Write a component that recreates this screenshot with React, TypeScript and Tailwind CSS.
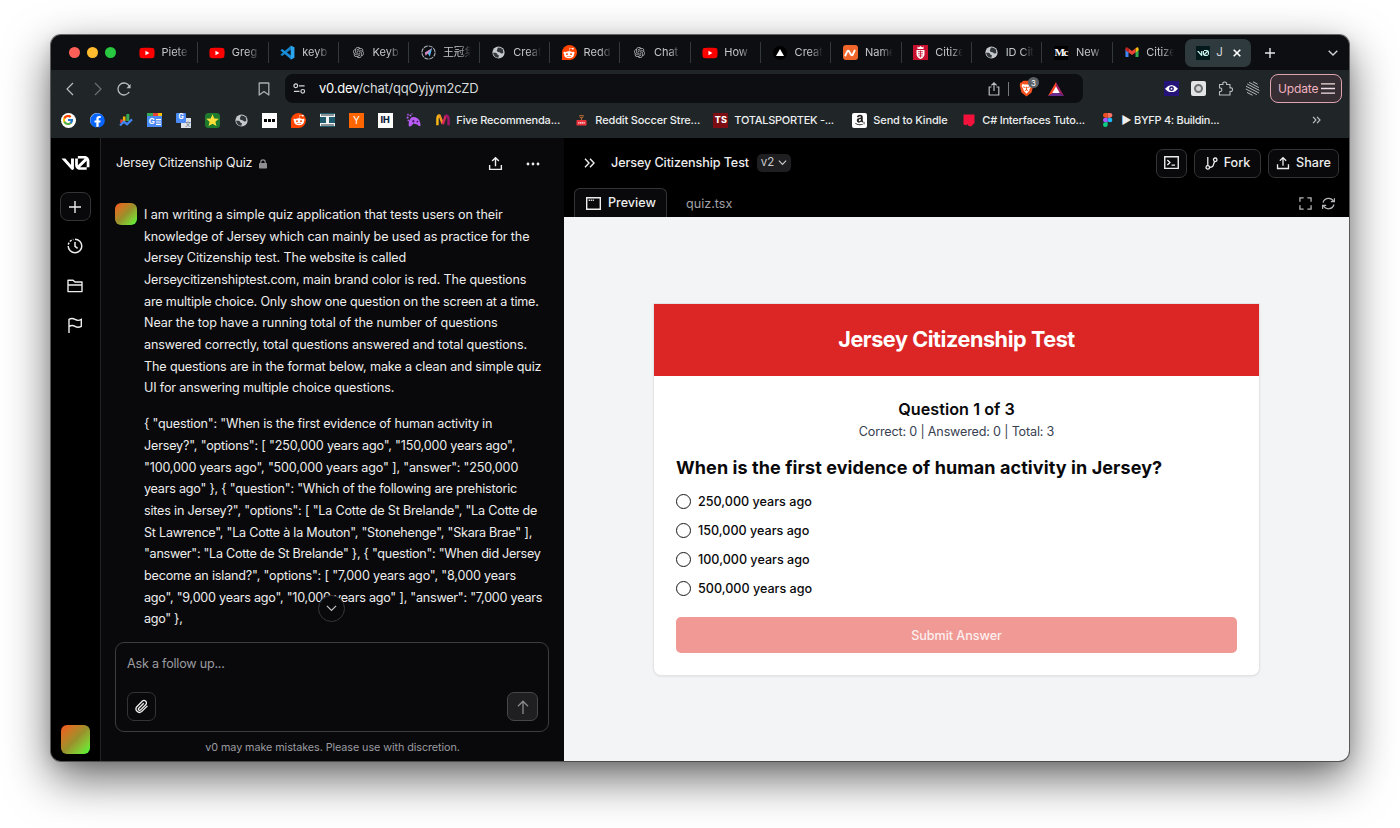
import type { ReactNode } from "react";
import { FaYoutube, FaFacebook, FaRedditAlien, FaAmazon } from "react-icons/fa";
import { FcGoogle } from "react-icons/fc";
import { RiOpenaiFill } from "react-icons/ri";

function V0Logo({ className }: { className?: string }) {
  return (
    <svg viewBox="0 0 40 20" fill="currentColor" className={className}>
      <path d="M23.39 0H32.92C36.78 0 39.91 3.13 39.91 7V16.08H36V7C36 6.9 36 6.81 35.99 6.72L26.46 16.08H36V19.78H26.56C22.7 19.78 19.48 16.61 19.48 12.75V3.69H23.39V12.75C23.39 12.93 23.41 13.1 23.43 13.27L33.17 3.7C33.09 3.69 33 3.69 32.92 3.69H23.39V0Z" />
      <path d="M13.77 19.1L0 3.69H5.54L13.62 12.73V3.69H17.75V17.57C17.75 19.67 15.17 20.66 13.77 19.1Z" />
    </svg>
  );
}

function Globe() {
  return (
    <svg viewBox="0 0 16 16" className="size-[13px]">
      <circle cx="8" cy="8" r="7.5" fill="#c5c9cc" />
      <path d="M1.2 8.2H4.2Q6.2 8.2 6.6 10.2Q7 11.4 8.4 11.2L8 14.6Q3 14.6 1.2 8.2Z" fill="#30363a" />
      <path d="M7 2.2Q10 1 13.4 4.4L14 8.4Q12.2 10 10.6 8.6Q9.6 7.6 7.6 7.4Q5.4 6.6 6 5Q6.8 4.4 7 2.2Z" fill="#30363a" />
    </svg>
  );
}

function YouTube() {
  return (
    <span className="relative flex items-center justify-center">
      <span className="absolute h-[6px] w-[6px] bg-white" />
      <FaYoutube className="relative size-[16px] text-[#ff0000]" />
    </span>
  );
}

function Reddit() {
  return (
    <span className="flex size-[15px] items-center justify-center rounded-full rounded-bl-[3px] bg-[#ff4500]">
      <FaRedditAlien className="size-[12px] text-white" />
    </span>
  );
}

function VsCode() {
  return (
    <svg viewBox="0 0 16 16" className="size-[15px]">
      <path d="M11.6 0.8V4.7L2.4 11.7L0.6 10.7V10.2Z" fill="#1583c9" />
      <path d="M11.6 15.2V11.3L2.4 4.3L0.6 5.3V5.8Z" fill="#1a90dc" />
      <path d="M11.4 0.4L15.4 2.3V13.7L11.4 15.6Z" fill="#2ba5ee" />
    </svg>
  );
}

function Compass() {
  return (
    <svg viewBox="0 0 16 16" className="size-[15px]" fill="none">
      <circle cx="8" cy="8" r="7" stroke="#aeb6be" strokeWidth="1.2" strokeDasharray="4.5 1" />
      <path d="M11.8 3.5L9.4 12.4L7.4 9L4 8.3Z" fill="#57b6ee" />
      <path d="M11.8 3.5L7.4 9L5 11.4L4 8.3Z" fill="#d685b8" />
    </svg>
  );
}

function Gmail() {
  return (
    <svg viewBox="0 0 16 12" className="w-[14px]">
      <path d="M0.5 2V10.5Q0.5 11.5 1.5 11.5H4V4.5Z" fill="#4285f4" />
      <path d="M15.5 2V10.5Q15.5 11.5 14.5 11.5H12V4.5Z" fill="#34a853" />
      <path d="M12 1.4L13.4 0.5Q15.5 0 15.5 2V3.6L12 6.2Z" fill="#fbbc04" />
      <path d="M4 1.4L2.6 0.5Q0.5 0 0.5 2V3.6L4 6.2Z" fill="#c5221f" />
      <path d="M4 1.4L8 4.5L12 1.4V6.2L8 9.2L4 6.2Z" fill="#ea4335" />
    </svg>
  );
}

function Brave() {
  return (
    <svg viewBox="0 0 16 18" className="h-[17px] w-[15px]">
      <path d="M4.5 0.8H11.5L13 2.4L14.8 2.8L15.2 6L13.4 13.2L8 17.4L2.6 13.2L0.8 6L1.2 2.8L3 2.4Z" fill="#f4521e" />
      <path d="M3.6 4.2L6 4.8H10L12.4 4.2L13.2 6.6L11.4 9.6L11 11.4L8 14.6L5 11.4L4.6 9.6L2.8 6.6Z" fill="#fff" />
      <path d="M4.4 7.2L7 8M11.6 7.2L9 8M8 7V10.6M6.2 11.4L8 10.4L9.8 11.4" stroke="#f4521e" strokeWidth="1" fill="none" />
    </svg>
  );
}

const tabs: { label: string; icon: ReactNode }[] = [
  { label: "Piete", icon: <YouTube /> },
  { label: "Greg", icon: <YouTube /> },
  { label: "keyb", icon: <VsCode /> },
  { label: "Keyb", icon: <RiOpenaiFill className="size-[13px] text-[#b4b6b8]" /> },
  { label: "王冠集", icon: <Compass /> },
  { label: "Creat", icon: <Globe /> },
  { label: "Redd", icon: <Reddit /> },
  { label: "Chat", icon: <RiOpenaiFill className="size-[13px] text-[#b4b6b8]" /> },
  { label: "How", icon: <YouTube /> },
  {
    label: "Creat",
    icon: (
      <span className="flex size-[14px] items-center justify-center rounded-full bg-black">
        <svg viewBox="0 0 8 7" className="w-[8px]"><path d="M4 0L8 7H0Z" fill="#fff" /></svg>
      </span>
    ),
  },
  {
    label: "Name",
    icon: (
      <span className="flex size-[15px] items-center justify-center rounded-[3px] bg-[#f0652a]">
        <svg viewBox="0 0 12 8" className="w-[12px]" fill="none" stroke="#fff" strokeWidth="1.9" strokeLinecap="round">
          <path d="M1.3 6.5L3.4 2.2Q4 1 5 2.2L7 5.7Q8 7 8.7 5.7L10.7 1.5" />
        </svg>
      </span>
    ),
  },
  {
    label: "Citize",
    icon: (
      <svg viewBox="0 0 15 15" className="size-[15px]">
        <rect width="15" height="15" fill="#c8102e" />
        <path d="M4.5 1.2L5.8 2.4L7.5 1L9.2 2.4L10.5 1.2V4H4.5Z" fill="#fff" />
        <path d="M3.5 5H11.5V9Q11.3 12.5 7.5 14Q3.7 12.5 3.5 9Z" fill="#fff" />
        <path d="M5 6.7H10M5 8.8H10M5.5 10.9H9.5M7.5 5.5V12.5" stroke="#c8102e" strokeWidth="0.8" />
      </svg>
    ),
  },
  { label: "ID Cit", icon: <Globe /> },
  {
    label: "New",
    icon: (
      <span className="flex h-[14px] w-[14px] items-center bg-black font-['Liberation_Serif',serif] text-[11px] font-bold tracking-[-1.4px] text-white">
        Mc
      </span>
    ),
  },
  { label: "Citize", icon: <Gmail /> },
];

const bookmarkIcons: ReactNode[] = [
  <span className="flex size-[15px] items-center justify-center rounded-full bg-white"><FcGoogle className="size-[12px]" /></span>,
  <span className="flex size-[14px] items-center justify-center rounded-full bg-white"><FaFacebook className="size-[15px] shrink-0 text-[#0866ff]" /></span>,
  <svg viewBox="0 0 14 14" className="size-[14px]" fill="none">
    <path d="M5.2 3.5V8" stroke="#f4b400" strokeWidth="2.6" />
    <path d="M8.8 1V8" stroke="#34a853" strokeWidth="3" />
    <path d="M2.6 6.5V10" stroke="#ea4335" strokeWidth="2.6" />
    <path d="M1 12.5L5 8.8L8 11.2L13 6.4" stroke="#4285f4" strokeWidth="2.2" />
  </svg>,
  <span className="flex h-[14px] w-[15px] flex-col rounded-[2px]">
    <span className="flex h-[3px]">
      <span className="w-[6px] bg-[#34a853]" />
      <span className="w-[5px] bg-[#ea4335]" />
      <span className="w-[4px] bg-[#fbbc04]" />
    </span>
    <span className="flex h-[11px] items-center justify-center gap-px bg-[#4c8bf5] text-[8px] font-bold leading-[11px] text-white">
      G
      <svg viewBox="0 0 5 6" className="w-[5px]" stroke="#fff" strokeWidth="1.1"><path d="M0 0.6H5M0 3H5M0 5.4H5" /></svg>
    </span>
  </span>,
  <span className="relative size-[15px]">
    <span className="absolute bottom-0 right-0 size-[10px] bg-[#dfe3e8] pl-[4px] text-[6px] leading-[11px] text-[#5b6b80]">文</span>
    <span className="absolute left-0 top-0 flex size-[10px] items-center justify-center rounded-[1px] bg-[#4c8bf5] text-[7px] font-bold text-white">G</span>
  </span>,
  <svg viewBox="0 0 15 15" className="size-[15px]">
    <rect width="15" height="15" rx="3.5" fill="#1e7b2e" />
    <path d="M7.5 1.3L9.3 5.4L13.8 5.8L10.4 8.7L11.4 13.1L7.5 10.8L3.6 13.1L4.6 8.7L1.2 5.8L5.7 5.4Z" fill="#ffe03a" />
  </svg>,
  <Globe />,
  <span className="flex size-[15px] items-center justify-center gap-[1px] bg-white">
    <span className="size-[3px] bg-black" />
    <span className="size-[3px] bg-black" />
    <span className="size-[3px] bg-black" />
  </span>,
  <Reddit />,
  <svg viewBox="0 0 15 14" className="w-[15px]">
    <rect width="15" height="14" fill="#1e5a6b" />
    <path d="M0 1H15V4H9V10H15V13H0V10H6V4H0Z" fill="#f2f2f2" />
    <path d="M1 2H14M1 12H14" stroke="#20343c" strokeWidth="1" />
  </svg>,
  <span className="flex size-[15px] items-center justify-center bg-[#ff6600] text-[10px] text-white">Y</span>,
  <span className="flex size-[15px] items-center justify-center bg-white text-[9px] font-extrabold text-[#0e2439]">IH</span>,
  <svg viewBox="0 0 15 14" className="w-[15px]" fill="#b95cf4">
    <path d="M5.2 4.6Q8 3.4 11 5Q14 6.5 14.6 12.4Q13.5 14.2 11.2 11.4L7.4 10.6Q5 14.2 3 13.4Q1.6 9 5.2 4.6Z" />
    <circle cx="2" cy="1.6" r="0.9" />
    <circle cx="4.4" cy="2.6" r="1" />
    <circle cx="1.6" cy="4.6" r="1.1" />
    <circle cx="6" cy="0.9" r="0.7" />
    <circle cx="2.4" cy="7.4" r="0.9" />
    <path d="M6 8.2H8.6M7.3 6.9V9.5" stroke="#3d1464" strokeWidth="0.9" />
    <circle cx="11.4" cy="8.6" r="0.9" fill="#3d1464" />
  </svg>,
];

function Wave() {
  return (
    <svg viewBox="0 0 15 12" className="w-[14px]" fill="none" strokeWidth="2.6">
      <path d="M1.5 12V5Q2 1 3.8 1.6" stroke="#fbb917" />
      <path d="M3.6 1L7.2 10.5" stroke="#f7931e" />
      <path d="M7.2 11L10.6 1.5" stroke="#d5275b" />
      <path d="M10.4 1.6Q12.8 1.6 13.5 5V12" stroke="#a3146f" />
    </svg>
  );
}

function Live() {
  return (
    <svg viewBox="0 0 12 12" className="w-[11px]">
      <path d="M3.5 1.4Q6 -0.4 8.5 1.4M4.2 3.2Q6 1.8 7.8 3.2" stroke="#b06530" strokeWidth="1.2" fill="none" />
      <path d="M6 3V6" stroke="#b06530" strokeWidth="1.2" />
      <rect x="0.5" y="5.5" width="11" height="6" rx="1" fill="#e8323c" />
      <path d="M2.5 8.6H9.5" stroke="#fff" strokeWidth="1.4" strokeDasharray="1.3 0.6" />
    </svg>
  );
}

const bookmarks: { label: string; width: string; text: string; icon: ReactNode }[] = [
  { label: "Five Recommenda...", width: "w-[139px]", text: "tracking-[-0.17px]", icon: <Wave /> },
  { label: "Reddit Soccer Stre...", width: "w-[139px]", text: "tracking-[-0.15px]", icon: <Live /> },
  { label: "TOTALSPORTEK -...", width: "w-[139px]", text: "tracking-[-0.28px]", icon: <span className="flex size-[15px] items-center justify-center bg-[#7c0d12] text-[9px] font-extrabold text-white">TS</span> },
  { label: "Send to Kindle", width: "w-[109px]", text: "tracking-[-0.15px]", icon: <span className="flex size-[15px] items-center justify-center rounded-[2px] bg-white"><FaAmazon className="size-[12px] text-[#221f1f]" /></span> },
  { label: "C# Interfaces Tuto...", width: "w-[139px]", text: "tracking-[-0.23px]", icon: <svg viewBox="0 0 12 13" className="w-[12px]"><path d="M0.5 0.5H11.5V9L8 12.5L0.5 10.5Z" fill="#f4123c" /><path d="M3.2 11.3Q5 9 5 11.8L7.6 12.4L5 13Z" fill="#202628" /></svg> },
  {
    label: "► BYFP 4: Buildin...", width: "w-[139px]", text: "tracking-[-0.28px]",
    icon: (
      <svg viewBox="0 0 10 15" className="h-[14px]">
        <path d="M5 0H2.5A2.5 2.5 0 0 0 2.5 5H5Z" fill="#f24e1e" />
        <path d="M5 0H7.5A2.5 2.5 0 0 1 7.5 5H5Z" fill="#ff7262" />
        <path d="M5 5H2.5A2.5 2.5 0 0 0 2.5 10H5Z" fill="#a259ff" />
        <circle cx="7.5" cy="7.5" r="2.5" fill="#1abcfe" />
        <path d="M5 10H2.5A2.5 2.5 0 1 0 5 12.5Z" fill="#0acf83" />
      </svg>
    ),
  },
];

function TabStrip() {
  return (
    <div className="flex h-[35px] items-center bg-[#0c0e11]">
      <div className="flex w-[77px] gap-[7px] pl-[18px]">
        <span className="size-[11px] rounded-full bg-[#ff5f57]" />
        <span className="size-[11px] rounded-full bg-[#febc2e]" />
        <span className="size-[11px] rounded-full bg-[#28c840]" />
      </div>
      {tabs.map((tab, i) => (
        <div key={i} className="flex h-[35px] w-[70.35px] shrink-0 items-center">
          <span className="ml-[11px] flex w-[16px] shrink-0 justify-center">{tab.icon}</span>
          <span className="ml-[6.5px] w-[28px] shrink-0 whitespace-nowrap text-[11px] text-[#c4c7c9] [mask-image:linear-gradient(to_right,black_55%,transparent_100%)]">
            {tab.label}
          </span>
          {i < tabs.length - 1 && <span className="ml-auto h-[21px] w-px bg-[#33383b]" />}
        </div>
      ))}
      <div className="ml-[2px] flex h-[28px] w-[66px] shrink-0 items-center rounded-[7px] bg-[#2f3a3f]">
        <span className="ml-[11px] flex size-[14px] items-center justify-center bg-[#03191c]">
          <V0Logo className="w-[12px] text-[#c8f3ee]" />
        </span>
        <span className="ml-[6px] text-[11.5px] text-[#d5d8da]">J</span>
        <svg viewBox="0 0 8 8" className="ml-[10px] size-[8px]" stroke="#fff" strokeWidth="1.6"><path d="M0.7 0.7L7.3 7.3M7.3 0.7L0.7 7.3" /></svg>
      </div>
      <svg viewBox="0 0 10 10" className="ml-[14px] size-[10px]" stroke="#e4e6e7" strokeWidth="1.4"><path d="M5 0V10M0 5H10" /></svg>
      <svg viewBox="0 0 10 6" className="ml-auto mr-[11px] w-[10px]" fill="none" stroke="#d0d3d5" strokeWidth="1.4"><path d="M0.7 0.7L5 5L9.3 0.7" /></svg>
    </div>
  );
}

function Toolbar() {
  return (
    <div className="flex h-[37px] items-center bg-[#202628]">
      <svg viewBox="0 0 8 14" className="ml-[15px] w-[8px]" fill="none" stroke="#b9bdbf" strokeWidth="1.2"><path d="M7 1L1 7L7 13" /></svg>
      <svg viewBox="0 0 8 14" className="ml-[20px] w-[8px]" fill="none" stroke="#6a7073" strokeWidth="1.2"><path d="M1 1L7 7L1 13" /></svg>
      <svg viewBox="0 0 14 14" className="ml-[15px] size-[14px]" fill="none" stroke="#b9bdbf" strokeWidth="1.3">
        <path d="M12.4 4.4A6 6 0 1 0 12.2 10" />
        <path d="M13.6 2V6.2H9.4Z" fill="#b9bdbf" stroke="none" />
      </svg>
      <svg viewBox="0 0 12 14" className="ml-[127px] w-[12px]" fill="none" stroke="#a9aeb0" strokeWidth="1.3"><path d="M1.2 1H10.8V13L6 9.4L1.2 13Z" strokeLinejoin="round" /></svg>
      <div className="ml-[15px] flex h-[29px] w-[798px] items-center rounded-[8px] bg-[#0c0e11]">
        <svg viewBox="0 0 14 12" className="ml-[8px] w-[13px]" fill="none" stroke="#d4d6d8" strokeWidth="1.3">
          <circle cx="3" cy="3" r="2" /><path d="M6.5 3H12.5M1 9H7" /><circle cx="10.5" cy="9" r="2" />
        </svg>
        <span className="ml-[13px] text-[13px] tracking-[-0.23px] text-[#d7dadc]"><span className="text-white">v0.dev</span>/chat/qqOyjym2cZD</span>
        <svg viewBox="0 0 12 14" className="ml-auto w-[12px]" fill="none" stroke="#b9bdbf" strokeWidth="1.2">
          <path d="M3.5 5H1.2V13H10.8V5H8.5M6 9V1M3.4 3.4L6 0.9L8.6 3.4" />
        </svg>
        <span className="ml-[8px] h-[14px] w-px bg-[#75797c]" />
        <span className="relative ml-[10px]">
          <Brave />
          <span className="absolute -top-[3px] left-[9px] flex size-[11px] items-center justify-center rounded-full bg-[#5b6167] text-[8px] text-white">3</span>
        </span>
        <svg viewBox="0 0 16 14" className="ml-[14px] mr-[19px] w-[16px]">
          <path d="M8 0L0 14L8 9.5Z" fill="#ff4724" />
          <path d="M8 0L16 14L8 9.5Z" fill="#9e1f63" />
          <path d="M0 14H16L8 9.5Z" fill="#662d91" />
          <path d="M8 4.5L11.7 11H4.3Z" fill="#fff" />
        </svg>
      </div>
      <span className="ml-[81px] flex size-[15px] items-center justify-center bg-[#25137a]">
        <svg viewBox="0 0 14 8" className="w-[13px]"><path d="M0 4Q3.5 0 7 0T14 4Q10.5 8 7 8T0 4Z" fill="#fff" /><circle cx="7" cy="4" r="2.6" fill="#25137a" /><circle cx="7" cy="4" r="1" fill="#fff" /></svg>
      </span>
      <span className="ml-[12px] flex size-[15px] items-center justify-center rounded-[2px] bg-[#e3e4e5]">
        <span className="size-[9px] rounded-full border-2 border-[#6f7375] bg-[#d2d3d4]" />
      </span>
      <svg viewBox="0 0 15 15" className="ml-[12px] size-[15px]" fill="none" stroke="#b9bdbf" strokeWidth="1.1" strokeLinejoin="round">
        <path d="M1.5 3.5H5Q4.2 1 6.7 1T8.5 3.5H12V7Q14.5 6.3 14.5 8.6T12 10.3V14H1.5V10.5Q3.8 10.8 3.8 8.7T1.5 7Z" />
      </svg>
      <svg viewBox="0 0 15 15" className="ml-[12px] size-[15px]" fill="none" stroke="#c4c7c9" strokeWidth="0.9">
        <path d="M4.2 1.4L13.8 6.6M2.2 3L14.4 9.4M1 5.2L14 12M0.8 8L11.8 13.6M2 11.4L7.6 14.3M8 0.8L12.6 3.2" />
      </svg>
      <div className="ml-[10px] flex h-[29px] w-[72px] items-center rounded-[8px] border border-[#e0a3b0] bg-[#372e33] pl-[7px]">
        <span className="text-[12px] tracking-[-0.15px] text-[#f2b3c0]">Update</span>
        <svg viewBox="0 0 14 11" className="ml-[3px] w-[14px] shrink-0" stroke="#f0dfe2" strokeWidth="1.3"><path d="M0 0.8H14M0 5.5H14M0 10.2H14" /></svg>
      </div>
    </div>
  );
}

function BookmarksBar() {
  return (
    <div className="flex h-[31px] items-center bg-[#202628] pb-[5px] pl-[3px]">
      {bookmarkIcons.map((icon, i) => (
        <span key={i} className="flex w-[28.8px] shrink-0 items-center justify-center">{icon}</span>
      ))}
      <div className="ml-[7px] flex">
        {bookmarks.map((b) => (
          <div key={b.label} className={`${b.width} flex shrink-0 items-center`}>
            <span className="flex w-[15px] justify-center">{b.icon}</span>
            <span className={`${b.text} ml-[6px] whitespace-nowrap text-[11px] font-medium text-[#eceeef]`}>{b.label}</span>
          </div>
        ))}
      </div>
      <svg viewBox="0 0 9 8" className="ml-auto mr-[28px] w-[9px]" fill="none" stroke="#b9bdbf" strokeWidth="1.2"><path d="M1 0.8L4 4L1 7.2M5 0.8L8 4L5 7.2" /></svg>
    </div>
  );
}

function ShareIcon({ className }: { className?: string }) {
  return (
    <svg viewBox="0 0 16 16" className={className} fill="none" stroke="currentColor" strokeWidth="1.5">
      <path d="M1.75 9.5V14.25H14.25V9.5M8 11V2.2M4.4 5.4L8 1.8L11.6 5.4" />
    </svg>
  );
}

function Sidebar() {
  return (
    <div className="flex w-[50px] shrink-0 flex-col items-center border-r border-[#232326] bg-black pr-px text-[#ededed]">
      <V0Logo className="mt-[18px] h-[14px] w-[29px] text-white" />
      <span className="mt-[22px] flex h-[29px] w-[31px] items-center justify-center rounded-[8px] border border-[#343437] bg-[#09090b]">
        <svg viewBox="0 0 12 12" className="size-[12px]" stroke="currentColor" strokeWidth="1.4"><path d="M6 0V12M0 6H12" /></svg>
      </span>
      <svg viewBox="0 0 16 16" className="mt-[17px] size-[16px]" fill="none" stroke="currentColor" strokeWidth="1.5">
        <path d="M8 1.2A6.8 6.8 0 1 1 1.2 8" />
        <path d="M1.3 6.6A6.8 6.8 0 0 1 6.4 1.4" strokeDasharray="2.2 1.3" />
        <path d="M8 4V8.3L10.6 10.4" />
      </svg>
      <svg viewBox="0 0 16 16" className="mt-[24px] size-[16px]" fill="none" stroke="currentColor" strokeWidth="1.4">
        <path d="M1 2.2H6L8 4H15V13.6H1ZM1 7H15" strokeLinejoin="round" />
      </svg>
      <svg viewBox="0 0 16 16" className="mt-[23px] size-[16px]" fill="none" stroke="currentColor" strokeWidth="1.4">
        <path d="M2 16V2.4Q5 0.5 8 2.4T14.3 2.4V9.4Q11 11.2 8 9.4T2 9.6" />
      </svg>
      <span className="mb-[7px] mt-auto size-[29px] rounded-[6px] bg-linear-to-br from-[#f8501d] via-[#98902b] to-[#35ff38]" />
    </div>
  );
}

const intro: [string, string][] = [
  ["tracking-[-0.07px]", "I am writing a simple quiz application that tests users on their"],
  ["tracking-[-0.14px]", "knowledge of Jersey which can mainly be used as practice for the"],
  ["tracking-[-0.11px]", "Jersey Citizenship test. The website is called"],
  ["tracking-[-0.13px]", "Jerseycitizenshiptest.com, main brand color is red. The questions"],
  ["tracking-[-0.17px]", "are multiple choice. Only show one question on the screen at a time."],
  ["tracking-[-0.1px]", "Near the top have a running total of the number of questions"],
  ["tracking-[-0.12px]", "answered correctly, total questions answered and total questions."],
  ["tracking-[-0.14px]", "The questions are in the format below, make a clean and simple quiz"],
  ["tracking-[-0.16px]", "UI for answering multiple choice questions."],
];

const data: [string, string][] = [
  ["tracking-[-0.19px]", '{ "question": "When is the first evidence of human activity in'],
  ["tracking-[-0.19px]", 'Jersey?", "options": [ "250,000 years ago", "150,000 years ago",'],
  ["tracking-[-0.18px]", '"100,000 years ago", "500,000 years ago" ], "answer": "250,000'],
  ["tracking-[-0.22px]", 'years ago" }, { "question": "Which of the following are prehistoric'],
  ["tracking-[-0.19px]", 'sites in Jersey?", "options": [ "La Cotte de St Brelande", "La Cotte de'],
  ["tracking-[-0.24px]", 'St Lawrence", "La Cotte à la Mouton", "Stonehenge", "Skara Brae" ],'],
  ["tracking-[-0.27px]", '"answer": "La Cotte de St Brelande" }, { "question": "When did Jersey'],
  ["tracking-[-0.18px]", 'become an island?", "options": [ "7,000 years ago", "8,000 years'],
  ["tracking-[-0.24px]", 'ago", "9,000 years ago", "10,000 years ago" ], "answer": "7,000 years'],
  ["tracking-[-0.3px]", 'ago" },'],
];

function Chat() {
  return (
    <div className="relative flex w-[463px] shrink-0 flex-col bg-[#09090b] text-[#ededed]">
      <div className="flex h-[51px] items-center pl-[15px]">
        <span className="text-[12.6px] tracking-[-0.16px]">Jersey Citizenship Quiz</span>
        <svg viewBox="0 0 8 10" className="ml-[7px] w-[8px]" fill="#8f8f93"><rect y="4" width="8" height="5.5" rx="0.8" /><path d="M1.8 4.5V3A2.2 2.2 0 0 1 6.2 3V4.5" fill="none" stroke="#8f8f93" strokeWidth="1.2" /></svg>
        <ShareIcon className="ml-auto size-[15px]" />
        <svg viewBox="0 0 14 4" className="ml-[23px] mr-[24px] w-[14px]" fill="currentColor"><circle cx="2" cy="2" r="1.4" /><circle cx="7" cy="2" r="1.4" /><circle cx="12" cy="2" r="1.4" /></svg>
      </div>
      <div className="flex h-[441px] pl-[14px] pt-[14px]">
        <span className="size-[22px] shrink-0 rounded-[6px] bg-linear-to-br from-[#f8501d] via-[#98902b] to-[#35ff38]" />
        <div className="ml-[7px] mt-px whitespace-nowrap text-[12.6px] leading-[21.65px]">
          <p>{intro.map(([tracking, line]) => <span key={line} className={`${tracking} block`}>{line}</span>)}</p>
          <p className="mt-[14.5px]">{data.map(([tracking, line]) => <span key={line} className={`${tracking} block`}>{line}</span>)}</p>
        </div>
      </div>
      <span className="absolute left-[217px] top-[457px] flex size-[27px] items-center justify-center rounded-full border border-[#37373a] bg-[#09090b]">
        <svg viewBox="0 0 12 7" className="w-[11px]" fill="none" stroke="#c5c5c8" strokeWidth="1.3"><path d="M1 1L6 6L11 1" /></svg>
      </span>
      <div className="ml-[14px] mt-[12px] flex h-[90px] w-[434px] flex-col rounded-[9px] border border-[#3d3d40] pl-[11px] pr-[10px] pt-[12px]">
        <span className="text-[12.6px] leading-[18px] tracking-[-0.22px] text-[#9b9ba0]">Ask a follow up...</span>
        <div className="mt-[19px] flex justify-between">
          <span className="flex size-[29px] items-center justify-center rounded-[7px] border border-[#343437]">
            <svg viewBox="0 0 16 16" className="size-[15px]" fill="none" stroke="#ededed" strokeWidth="1.4">
              <path d="M14.3 7.3L8.2 13.4A3.7 3.7 0 0 1 3 8.2L8.8 2.4A2.6 2.6 0 0 1 12.5 6.1L7 11.6A1.3 1.3 0 0 1 5.1 9.8L10.4 4.5" />
            </svg>
          </span>
          <span className="flex h-[29px] w-[31px] items-center justify-center rounded-[7px] border border-[#47474a] bg-[#1f1f21]">
            <svg viewBox="0 0 12 14" className="w-[12px]" fill="none" stroke="#8b8b8f" strokeWidth="1.3"><path d="M6 14V1.2M1 6.2L6 1.2L11 6.2" /></svg>
          </span>
        </div>
      </div>
      <p className="mt-[8px] text-center text-[10.8px] leading-[16px] tracking-[-0.08px] text-[#9b9ba0]">v0 may make mistakes. Please use with discretion.</p>
    </div>
  );
}

function HeaderButton({ className, children }: { className: string; children: ReactNode }) {
  return (
    <span className={`${className} flex h-[29px] items-center justify-center gap-[6px] rounded-[7px] border border-[#343437] bg-[#09090b] text-[12.6px] font-medium`}>
      {children}
    </span>
  );
}

function PreviewHeader() {
  return (
    <div className="flex h-[79px] flex-col bg-black text-[#ededed]">
      <div className="flex h-[50px] items-center pl-[20px] pr-[10px]">
        <svg viewBox="0 0 11 10" className="w-[11px]" fill="none" stroke="currentColor" strokeWidth="1.4"><path d="M1 0.8L5 5L1 9.2M6 0.8L10 5L6 9.2" /></svg>
        <span className="ml-[16px] pt-px text-[12.6px] font-medium tracking-[-0.09px]">Jersey Citizenship Test</span>
        <span className="ml-[8px] flex h-[18px] w-[34px] items-center justify-center gap-[4px] rounded-[5px] bg-[#1f1f21] text-[11.5px] text-[#c9c9cc]">
          v2
          <svg viewBox="0 0 10 6" className="w-[9px]" fill="none" stroke="currentColor" strokeWidth="1.3"><path d="M1 0.7L5 4.9L9 0.7" /></svg>
        </span>
        <div className="ml-auto flex gap-[7px]">
          <HeaderButton className="w-[31px]">
            <svg viewBox="0 0 16 14" className="w-[15px]" fill="none" stroke="currentColor" strokeWidth="1.5"><path d="M0.8 0.8H15.2V13.2H0.8ZM3.6 4.3L6.3 7L3.6 9.7M8 9.7H11.8" /></svg>
          </HeaderButton>
          <HeaderButton className="w-[67px]">
            <svg viewBox="0 0 14 14" className="size-[13px]" fill="none" stroke="currentColor" strokeWidth="1.4">
              <circle cx="3" cy="11.2" r="1.9" /><circle cx="11" cy="3" r="1.9" /><path d="M3 0V9.3M4.9 11.2Q9 11 9.3 7.5L10.4 4.9" />
            </svg>
            <span className="pt-px">Fork</span>
          </HeaderButton>
          <HeaderButton className="w-[71px]">
            <ShareIcon className="size-[14px]" />
            <span className="pt-px">Share</span>
          </HeaderButton>
        </div>
      </div>
      <div className="flex h-[29px] items-end pl-[10px]">
        <span className="flex h-[29px] w-[93px] items-center rounded-t-[6px] border border-b-0 border-[#343437] bg-[#09090b] pl-[11px] pt-px text-[12.6px] font-medium">
          <svg viewBox="0 0 15 13" className="mr-[7px] w-[15px]" fill="none" stroke="currentColor" strokeWidth="1.4"><path d="M0.7 0.7H14.3V12.3H0.7Z" /><path d="M2.7 3.3H8.2" strokeDasharray="1.2 0.8" /></svg>
          Preview
        </span>
        <span className="ml-[19px] text-[12.6px] leading-[26px] text-[#a1a1a6]">quiz.tsx</span>
        <svg viewBox="0 0 14 14" className="mb-[7px] ml-auto size-[13px]" fill="none" stroke="#b5b5b9" strokeWidth="1.4"><path d="M1 5V1H5M9 1H13V5M13 9V13H9M5 13H1V9" /></svg>
        <svg viewBox="0 0 16 14" className="mb-[7px] ml-[9px] mr-[13px] w-[15px]" fill="none" stroke="#b5b5b9" strokeWidth="1.3">
          <path d="M2.2 6A6 6 0 0 1 13.3 4.6M13.8 8A6 6 0 0 1 2.7 9.4M14.3 1.2V5H10.5M1.7 12.8V9H5.5" />
        </svg>
      </div>
    </div>
  );
}

function Quiz() {
  return (
    <div className="flex h-[544px] flex-col items-center bg-[#f3f4f6]">
      <div className="mt-[87px] flex h-[371px] w-[605px] flex-col rounded-b-[7px] bg-white text-[#09090b] shadow-[0_0_0_1px_#e4e4e7,0_1px_3px_rgba(0,0,0,0.12)]">
        <h1 className="flex h-[72px] items-center justify-center bg-[#dc2626] pb-[2px] text-[21.6px] font-bold tracking-[-0.43px] text-white">Jersey Citizenship Test</h1>
        <div className="flex flex-col px-[22px] pt-[21px]">
          <h2 className="text-center text-[16.2px] font-semibold leading-[25px] tracking-[0.04px]">Question 1 of 3</h2>
          <p className="mt-px text-center text-[12.6px] leading-[18px] tracking-[-0.17px] text-[#374151]">Correct: 0 | Answered: 0 | Total: 3</p>
          <h3 className="mt-[14px] whitespace-nowrap text-[18px] font-bold leading-[25px] tracking-[0.09px]">When is the first evidence of human activity in Jersey?</h3>
          <div className="mt-[13px] flex flex-col gap-[11px]">
            {["250,000 years ago", "150,000 years ago", "100,000 years ago", "500,000 years ago"].map((option) => (
              <div key={option} className="flex h-[18px] items-center gap-[7px] text-[12.6px] font-medium">
                <span className="mb-px size-[15px] rounded-full border border-[#18181b]" />
                <span className="pt-px">{option}</span>
              </div>
            ))}
          </div>
          <span className="mt-[19px] flex h-[36px] items-center justify-center rounded-[5px] bg-[#f09995] pt-[2px] text-[12.6px] font-medium tracking-[-0.05px] text-[#fdf0ef]">Submit Answer</span>
        </div>
      </div>
    </div>
  );
}

export default function App() {
  return (
    <div className="h-[828px] w-[1400px] overflow-hidden bg-white pl-[51px] pt-[35px] font-[Inter,'Noto_Sans_CJK_SC',sans-serif]">
      <div className="h-[726px] w-[1298px] rounded-[10px] shadow-[0_0_0_1px_rgba(60,60,60,0.75),0_17px_46px_rgba(0,0,0,0.6),0_4px_14px_rgba(0,0,0,0.12)]">
        <div className="flex h-full flex-col overflow-hidden rounded-[10px] bg-black">
          <TabStrip />
          <Toolbar />
          <BookmarksBar />
          <div className="flex grow">
            <Sidebar />
            <Chat />
            <div className="flex grow flex-col">
              <PreviewHeader />
              <Quiz />
            </div>
          </div>
        </div>
      </div>
    </div>
  );
}
